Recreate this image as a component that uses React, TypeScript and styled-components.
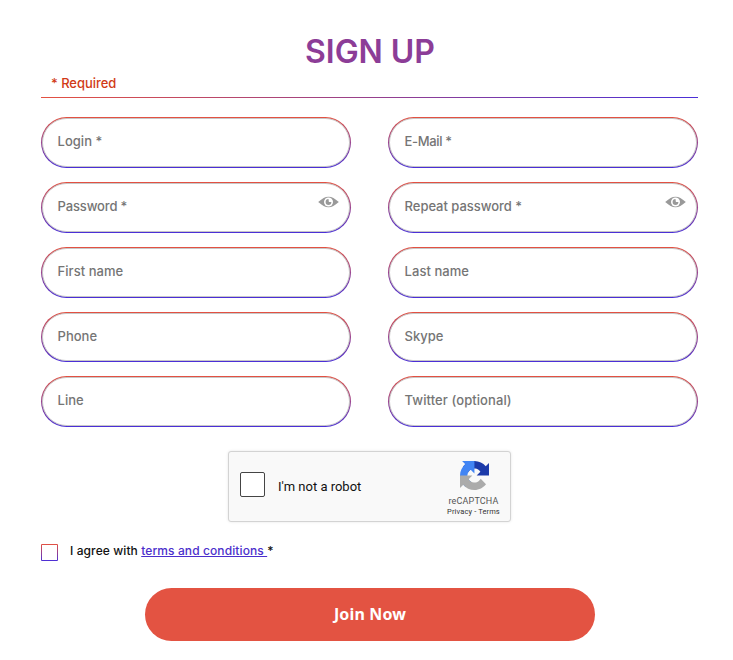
import React from "react";
import styled, { createGlobalStyle } from "styled-components";

const GlobalStyle = createGlobalStyle`
  *, *::before, *::after { box-sizing: border-box; }
  html, body { margin: 0; background: #fff; }
  body { font-family: Inter, "Liberation Sans", sans-serif; color: #111; overflow: hidden; }
`;

const Form = styled.form`
  width: 657px;
  height: 660px;
  margin-left: 41px;
  padding-top: 32px;
  display: flex;
  flex-direction: column;
`;

const Title = styled.h1`
  margin: 0;
  padding-left: 1px;
  height: 40px;
  line-height: 40px;
  font-size: 32px;
  font-weight: 600;
  letter-spacing: -0.05px;
  text-align: center;
  color: #8c3d97;
`;

const Required = styled.div`
  height: 26px;
  padding: 3px 0 0 10px;
  line-height: 16px;
  font-size: 13px;
  font-weight: 500;
  letter-spacing: -0.05px;
  color: #d13a16;
  border-bottom: 1px solid transparent;
  border-image: linear-gradient(90deg, #e45141, #4a2fd8) 1;
`;

const Fields = styled.div`
  display: grid;
  grid-template-columns: 310px 310px;
  column-gap: 37px;
  row-gap: 14px;
  padding-top: 19.15px;
`;

const Field = styled.label`
  display: flex;
  height: 50.8px;
  padding: 1px;
  border-radius: 26px;
  background: linear-gradient(180deg, #e45141, #4a2fd8);
`;

const FieldInner = styled.span`
  flex: 1;
  display: flex;
  align-items: center;
  justify-content: space-between;
  padding: 0 10px 2.8px 14.6px;
  border: 1px solid #c8c8c8;
  border-radius: 25px;
  background: #fff;
`;

const Placeholder = styled.span<{ $spacing?: number }>`
  font-size: 13px;
  line-height: 16px;
  font-weight: 500;
  letter-spacing: ${(p) => p.$spacing ?? 0}px;
  color: #757575;
  white-space: nowrap;
`;

const Eye = styled.svg`
  width: 21px;
  height: 12px;
  margin-bottom: 7px;
`;

const Captcha = styled.div`
  display: flex;
  width: 283px;
  height: 71px;
  margin: 23.85px 0 0 187px;
  border: 1px solid #d3d3d3;
  border-radius: 3px;
  background: #f9f9f9;
  box-shadow: 0 0 3px rgba(0, 0, 0, 0.1);
  font-family: Roboto, sans-serif;
`;

const CaptchaBox = styled.span`
  width: 25px;
  height: 25px;
  margin: 20px 0 0 11px;
  border: 1px solid #444;
  border-radius: 2px;
  background: #fff;
`;

const CaptchaLabel = styled.span`
  flex: 1;
  margin: 26px 0 0 13px;
  font-size: 13px;
  line-height: 17px;
  color: #111;
`;

const Brand = styled.div`
  display: flex;
  flex-direction: column;
  align-items: center;
  width: 73px;
  padding-top: 9px;
`;

const Logo = styled.svg`
  width: 29px;
  height: 29px;
  margin-left: 1px;
`;

const BrandName = styled.span`
  margin-top: 5px;
  font: 9px/12px Roboto, sans-serif;
  letter-spacing: 0.15px;
  color: #555;
`;

const BrandLinks = styled.span`
  font: 7.5px/9px Roboto, sans-serif;
  letter-spacing: 0.12px;
  color: #333;
  white-space: nowrap;
`;

const Agreement = styled.label`
  display: flex;
  margin-top: 21px;
  height: 18px;
  font-size: 12px;
  line-height: 16px;
  font-weight: 500;
  letter-spacing: 0.1px;
`;

const Check = styled.span`
  width: 17px;
  height: 17px;
  margin-top: 1px;
  margin-right: 12px;
  padding: 1px;
  border-radius: 1px;
  background: linear-gradient(180deg, #e45141, #4a2fd8);
  &::before { content: ""; display: block; height: 100%; background: #fff; }
`;

const TermsLink = styled.a`
  color: #4b2fcc;
  text-decoration: underline;
`;

const Submit = styled.button`
  width: 450px;
  height: 53px;
  margin: 27px 0 0 104px;
  border: 0;
  border-radius: 27px;
  background: #e35342;
  color: #fff;
  font: 700 16px/20px "Noto Sans", sans-serif;
  letter-spacing: 0.15px;
`;

const rows: { label: string; secret?: boolean; spacing?: number }[] = [
  { label: "Login *" },
  { label: "E-Mail *", spacing: -0.35 },
  { label: "Password *", secret: true, spacing: -0.15 },
  { label: "Repeat password *", secret: true, spacing: -0.04 },
  { label: "First name", spacing: 0.04 },
  { label: "Last name", spacing: 0.04 },
  { label: "Phone" },
  { label: "Skype" },
  { label: "Line" },
  { label: "Twitter (optional)", spacing: 0.08 },
];

function EyeIcon() {
  return (
    <Eye viewBox="0 0 21 12">
      <path d="M.2 6C4.4 2.4 7 .7 10.5.7S16.600 2.400 20.800 6C16.600 9.600 14 11.300 10.500 11.300S4.400 9.600.2 6Z" fill="#999" />
      <circle cx="10.5" cy="6" r="4.5" fill="#fff" />
      <path d="M10.500 3.100a2.900 2.900 0 1 0 2.900 2.900h-2.500Z" fill="#999" />
    </Eye>
  );
}

function RecaptchaLogo() {
  return (
    <Logo viewBox="0 0 64 64">
      <path fill="#1c3aa9" d="M64 31.955l-.033-1.37V4.687l-7.16 7.16C50.948 4.674 42.033.093 32.05.093c-10.4 0-19.622 4.96-25.458 12.64l11.736 11.86a15.55 15.55 0 0 1 4.754-5.334c2.05-1.6 4.952-2.906 8.968-2.906.485 0 .86.057 1.135.163 4.976.393 9.288 3.14 11.828 7.124l-8.307 8.307L64 31.953" />
      <path fill="#4285f4" d="M31.862.094l-1.37.033H4.594l7.16 7.16C4.58 13.147 0 22.06 0 32.046c0 10.4 4.96 19.622 12.64 25.458L24.5 45.768a15.55 15.55 0 0 1-5.334-4.754c-1.6-2.05-2.906-4.952-2.906-8.968 0-.485.057-.86.163-1.135.393-4.976 3.14-9.288 7.124-11.828l8.307 8.307L31.86.095" />
      <path fill="#ababab" d="M.001 32.045l.033 1.37v25.898l7.16-7.16c5.86 7.173 14.774 11.754 24.76 11.754 10.4 0 19.622-4.96 25.458-12.64l-11.736-11.86a15.55 15.55 0 0 1-4.754 5.334c-2.05 1.6-4.952 2.906-8.968 2.906-.485 0-.86-.057-1.135-.163-4.976-.393-9.288-3.14-11.828-7.124l8.307-8.307c-10.522.04-22.4.066-27.295-.005" />
    </Logo>
  );
}

export default function App() {
  return (
    <>
      <GlobalStyle />
      <Form>
        <Title>SIGN UP</Title>
        <Required>* Required</Required>
        <Fields>
          {rows.map(({ label, secret, spacing }) => (
            <Field key={label}>
              <FieldInner>
                <Placeholder $spacing={spacing}>{label}</Placeholder>
                {secret && <EyeIcon />}
              </FieldInner>
            </Field>
          ))}
        </Fields>
        <Captcha>
          <CaptchaBox />
          <CaptchaLabel>I'm not a robot</CaptchaLabel>
          <Brand>
            <RecaptchaLogo />
            <BrandName>reCAPTCHA</BrandName>
            <BrandLinks>Privacy - Terms</BrandLinks>
          </Brand>
        </Captcha>
        <Agreement>
          <Check />
          <span>
            I agree with <TermsLink>terms and conditions </TermsLink>*
          </span>
        </Agreement>
        <Submit type="button">Join Now</Submit>
      </Form>
    </>
  );
}
